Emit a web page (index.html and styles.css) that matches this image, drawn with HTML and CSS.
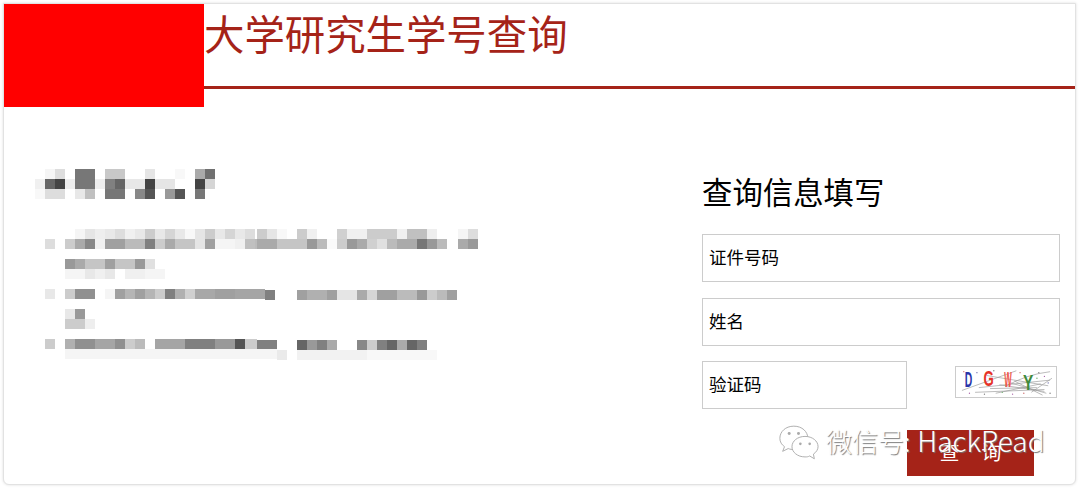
FILE: index.html
```html
<!DOCTYPE html>
<html lang="zh-CN">
<head>
    <meta charset="UTF-8">
    <title>大学研究生学号查询</title>
    <link rel="stylesheet" href="styles.css">
</head>
<body>
    <div class="card">
        <!-- Header -->
        <header class="top">
            <div class="logo"></div>
            <h1 class="site-title">大学研究生学号查询</h1>
        </header>

        <main class="content">
            <!-- Blurred notice -->
            <section class="notice">
                <svg class="mosaic" width="450" height="195" viewBox="35 169 450 195" shape-rendering="crispEdges">
                    <!-- heading -->
                    <g>
                        <rect x="45" y="169" width="10" height="10" fill="#f5f5f5"/><rect x="55" y="169" width="10" height="10" fill="#ddd"/><rect x="75" y="169" width="20" height="10" fill="#777"/><rect x="105" y="169" width="20" height="10" fill="#c8c8c8"/><rect x="145" y="169" width="10" height="10" fill="#e5e5e5"/><rect x="175" y="169" width="10" height="10" fill="#f8f8f8"/><rect x="195" y="169" width="10" height="10" fill="#aaa"/><rect x="205" y="169" width="10" height="10" fill="#707070"/>
                        <rect x="35" y="179" width="10" height="10" fill="#f0f0f0"/><rect x="45" y="179" width="10" height="10" fill="#666"/><rect x="55" y="179" width="10" height="10" fill="#444"/><rect x="65" y="179" width="10" height="10" fill="#eee"/><rect x="75" y="179" width="20" height="10" fill="#777"/><rect x="95" y="179" width="10" height="10" fill="#eee"/><rect x="105" y="179" width="10" height="10" fill="#808080"/><rect x="115" y="179" width="10" height="10" fill="#666"/><rect x="125" y="179" width="20" height="10" fill="#e8e8e8"/><rect x="145" y="179" width="10" height="10" fill="#444"/><rect x="155" y="179" width="20" height="10" fill="#e5e5e5"/><rect x="195" y="179" width="10" height="10" fill="#444"/><rect x="205" y="179" width="10" height="10" fill="#d5d5d5"/>
                        <rect x="35" y="189" width="10" height="10" fill="#f8f8f8"/><rect x="45" y="189" width="20" height="10" fill="#ddd"/><rect x="75" y="189" width="10" height="10" fill="#e8e8e8"/><rect x="85" y="189" width="10" height="10" fill="#c0c0c0"/><rect x="105" y="189" width="20" height="10" fill="#777"/><rect x="135" y="189" width="10" height="10" fill="#888"/><rect x="145" y="189" width="10" height="10" fill="#555"/><rect x="165" y="189" width="10" height="10" fill="#999"/><rect x="175" y="189" width="10" height="10" fill="#555"/><rect x="195" y="189" width="10" height="10" fill="#777"/>
                    </g>
                    <!-- first item -->
                    <g>
                        <rect x="75" y="229" width="10" height="10" fill="#f5f5f5"/><rect x="85" y="229" width="10" height="10" fill="#e5e5e5"/><rect x="95" y="229" width="10" height="10" fill="#eee"/><rect x="105" y="229" width="10" height="10" fill="#e8e8e8"/><rect x="115" y="229" width="10" height="10" fill="#ddd"/><rect x="125" y="229" width="10" height="10" fill="#f0f0f0"/><rect x="135" y="229" width="10" height="10" fill="#e8e8e8"/><rect x="145" y="229" width="10" height="10" fill="#ccc"/><rect x="155" y="229" width="10" height="10" fill="#e8e8e8"/><rect x="165" y="229" width="10" height="10" fill="#d5d5d5"/><rect x="175" y="229" width="10" height="10" fill="#e8e8e8"/><rect x="185" y="229" width="10" height="10" fill="#f8f8f8"/><rect x="195" y="229" width="10" height="10" fill="#e5e5e5"/><rect x="205" y="229" width="10" height="10" fill="#ccc"/><rect x="215" y="229" width="10" height="10" fill="#e8e8e8"/><rect x="225" y="229" width="10" height="10" fill="#d5d5d5"/><rect x="235" y="229" width="10" height="10" fill="#e8e8e8"/><rect x="245" y="229" width="10" height="10" fill="#ddd"/><rect x="257" y="229" width="10" height="10" fill="#ccc"/><rect x="267" y="229" width="10" height="10" fill="#e5e5e5"/><rect x="277" y="229" width="10" height="10" fill="#f8f8f8"/><rect x="297" y="229" width="10" height="10" fill="#ccc"/><rect x="307" y="229" width="10" height="10" fill="#f0f0f0"/><rect x="337" y="229" width="10" height="10" fill="#d0d0d0"/><rect x="347" y="229" width="20" height="10" fill="#f0f0f0"/><rect x="367" y="229" width="30" height="10" fill="#ccc"/><rect x="397" y="229" width="10" height="10" fill="#f0f0f0"/><rect x="407" y="229" width="20" height="10" fill="#c0c0c0"/><rect x="427" y="229" width="10" height="10" fill="#eee"/><rect x="458" y="229" width="10" height="10" fill="#f5f5f5"/><rect x="468" y="229" width="10" height="10" fill="#ddd"/>
                        <rect x="45" y="239" width="10" height="10" fill="#ddd"/><rect x="65" y="239" width="10" height="10" fill="#ccc"/><rect x="75" y="239" width="10" height="10" fill="#aaa"/><rect x="85" y="239" width="10" height="10" fill="#888"/><rect x="95" y="239" width="10" height="10" fill="#f0f0f0"/><rect x="105" y="239" width="20" height="10" fill="#a0a0a0"/><rect x="125" y="239" width="20" height="10" fill="#bbb"/><rect x="145" y="239" width="10" height="10" fill="#808080"/><rect x="155" y="239" width="10" height="10" fill="#ccc"/><rect x="165" y="239" width="10" height="10" fill="#aaa"/><rect x="175" y="239" width="20" height="10" fill="#c5c5c5"/><rect x="195" y="239" width="10" height="10" fill="#e5e5e5"/><rect x="205" y="239" width="10" height="10" fill="#a0a0a0"/><rect x="215" y="239" width="20" height="10" fill="#f5f5f5"/><rect x="235" y="239" width="10" height="10" fill="#f0f0f0"/><rect x="245" y="239" width="10" height="10" fill="#c0c0c0"/><rect x="255" y="239" width="2" height="10" fill="#bbb"/><rect x="257" y="239" width="20" height="10" fill="#aaa"/><rect x="277" y="239" width="30" height="10" fill="#c5c5c5"/><rect x="307" y="239" width="10" height="10" fill="#999"/><rect x="317" y="239" width="10" height="10" fill="#bbb"/><rect x="327" y="239" width="10" height="10" fill="#fafafa"/><rect x="337" y="239" width="10" height="10" fill="#ccc"/><rect x="347" y="239" width="10" height="10" fill="#999"/><rect x="357" y="239" width="10" height="10" fill="#aaa"/><rect x="367" y="239" width="10" height="10" fill="#d0d0d0"/><rect x="377" y="239" width="10" height="10" fill="#e0e0e0"/><rect x="387" y="239" width="10" height="10" fill="#bbb"/><rect x="397" y="239" width="20" height="10" fill="#aaa"/><rect x="417" y="239" width="10" height="10" fill="#777"/><rect x="427" y="239" width="10" height="10" fill="#999"/><rect x="437" y="239" width="10" height="10" fill="#bbb"/><rect x="458" y="239" width="10" height="10" fill="#aaa"/><rect x="468" y="239" width="10" height="10" fill="#999"/>
                        <rect x="65" y="259" width="10" height="10" fill="#999"/><rect x="75" y="259" width="10" height="10" fill="#aaa"/><rect x="85" y="259" width="20" height="10" fill="#c5c5c5"/><rect x="105" y="259" width="10" height="10" fill="#a0a0a0"/><rect x="115" y="259" width="20" height="10" fill="#c5c5c5"/><rect x="135" y="259" width="10" height="10" fill="#999"/><rect x="145" y="259" width="10" height="10" fill="#e0e0e0"/>
                        <rect x="65" y="269" width="20" height="10" fill="#f5f5f5"/><rect x="85" y="269" width="10" height="10" fill="#e8e8e8"/><rect x="95" y="269" width="10" height="10" fill="#f0f0f0"/><rect x="105" y="269" width="10" height="10" fill="#e8e8e8"/><rect x="125" y="269" width="20" height="10" fill="#f0f0f0"/><rect x="145" y="269" width="20" height="10" fill="#f5f5f5"/>
                    </g>
                    <!-- second item -->
                    <g>
                        <rect x="45" y="289" width="10" height="10" fill="#e8e8e8"/><rect x="65" y="289" width="10" height="10" fill="#ccc"/><rect x="75" y="289" width="20" height="10" fill="#909090"/><rect x="105" y="289" width="10" height="10" fill="#f5f5f5"/><rect x="115" y="289" width="10" height="10" fill="#a0a0a0"/><rect x="125" y="289" width="10" height="10" fill="#b5b5b5"/><rect x="135" y="289" width="10" height="10" fill="#a0a0a0"/><rect x="145" y="289" width="10" height="10" fill="#b5b5b5"/><rect x="155" y="289" width="10" height="10" fill="#ccc"/><rect x="165" y="289" width="10" height="10" fill="#808080"/><rect x="175" y="289" width="10" height="10" fill="#b0b0b0"/><rect x="185" y="289" width="10" height="10" fill="#d0d0d0"/><rect x="195" y="289" width="20" height="10" fill="#a8a8a8"/><rect x="215" y="289" width="20" height="10" fill="#a0a0a0"/><rect x="235" y="289" width="30" height="10" fill="#a5a5a5"/><rect x="265" y="290" width="10" height="10" fill="#808080"/><rect x="297" y="290" width="10" height="10" fill="#a0a0a0"/><rect x="307" y="290" width="20" height="10" fill="#b0b0b0"/><rect x="327" y="290" width="10" height="10" fill="#a0a0a0"/><rect x="337" y="290" width="20" height="10" fill="#e5e5e5"/><rect x="357" y="290" width="10" height="10" fill="#aaa"/><rect x="367" y="290" width="10" height="10" fill="#d5d5d5"/><rect x="377" y="290" width="20" height="10" fill="#a0a0a0"/><rect x="397" y="290" width="20" height="10" fill="#bbb"/><rect x="417" y="290" width="10" height="10" fill="#999"/><rect x="427" y="290" width="10" height="10" fill="#ccc"/><rect x="437" y="290" width="10" height="10" fill="#bbb"/><rect x="447" y="290" width="10" height="10" fill="#a0a0a0"/>
                        <rect x="65" y="309" width="10" height="10" fill="#e8e8e8"/><rect x="75" y="309" width="10" height="10" fill="#999"/>
                        <rect x="65" y="319" width="20" height="10" fill="#ccc"/><rect x="85" y="319" width="10" height="10" fill="#eee"/>
                    </g>
                    <!-- third item -->
                    <g>
                        <rect x="45" y="339" width="10" height="10" fill="#ccc"/><rect x="65" y="339" width="10" height="10" fill="#b0b0b0"/><rect x="75" y="339" width="20" height="10" fill="#909090"/><rect x="95" y="339" width="20" height="10" fill="#a5a5a5"/><rect x="115" y="339" width="10" height="10" fill="#909090"/><rect x="125" y="339" width="10" height="10" fill="#ccc"/><rect x="135" y="339" width="10" height="10" fill="#bbb"/><rect x="155" y="339" width="30" height="10" fill="#a5a5a5"/><rect x="185" y="339" width="30" height="10" fill="#808080"/><rect x="215" y="339" width="20" height="10" fill="#999"/><rect x="235" y="339" width="10" height="10" fill="#555"/><rect x="245" y="339" width="12" height="10" fill="#ccc"/><rect x="257" y="340" width="20" height="10" fill="#808080"/><rect x="297" y="340" width="10" height="10" fill="#666"/><rect x="307" y="340" width="10" height="10" fill="#999"/><rect x="317" y="340" width="10" height="10" fill="#808080"/><rect x="327" y="340" width="10" height="10" fill="#aaa"/><rect x="357" y="340" width="10" height="10" fill="#888"/><rect x="367" y="340" width="10" height="10" fill="#ccc"/><rect x="377" y="340" width="10" height="10" fill="#808080"/><rect x="387" y="340" width="10" height="10" fill="#666"/><rect x="397" y="340" width="10" height="10" fill="#aaa"/><rect x="407" y="340" width="10" height="10" fill="#666"/><rect x="417" y="340" width="10" height="10" fill="#808080"/>
                        <rect x="65" y="349" width="212" height="10" fill="#f5f5f5"/><rect x="277" y="350" width="10" height="10" fill="#eaeaea"/><rect x="297" y="350" width="70" height="10" fill="#f2f2f2"/><rect x="367" y="350" width="70" height="10" fill="#f8f8f8"/>
                    </g>
                </svg>
            </section>

            <!-- Query form -->
            <section class="query">
                <h2 class="query-title">查询信息填写</h2>
                <form class="query-form">
                    <input class="field" type="text" placeholder="证件号码">
                    <input class="field" type="text" placeholder="姓名">
                    <div class="captcha-row">
                        <input class="field field-short" type="text" placeholder="验证码">
                        <svg class="captcha" width="102" height="32" viewBox="0 0 102 32">
                            <g fill="none" stroke="#999" stroke-width="0.7">
                                <path d="M4 25 L62 4"/><path d="M22 22 L98 14"/><path d="M30 9 L96 20"/><path d="M18 27 L92 24"/><path d="M50 21 Q72 8 98 5"/><path d="M40 28 L88 18"/><path d="M56 17 L94 28"/><path d="M60 15 L90 30"/><path d="M78 27 L100 12"/><path d="M34 23 L84 22"/><path d="M44 19 L92 26"/>
                            </g>
                            <g>
                                <circle cx="6" cy="5" r="0.7" fill="#c66"/><circle cx="20" cy="6" r="0.7" fill="#66a"/><circle cx="38" cy="4" r="0.7" fill="#777"/><circle cx="47" cy="27" r="0.7" fill="#6a6"/><circle cx="12" cy="28" r="0.7" fill="#a6a"/><circle cx="66" cy="6" r="0.7" fill="#c66"/><circle cx="86" cy="6" r="0.7" fill="#777"/><circle cx="92" cy="10" r="0.7" fill="#a6a"/><circle cx="96" cy="17" r="0.7" fill="#66a"/><circle cx="84" cy="12" r="0.7" fill="#6a6"/><circle cx="70" cy="28" r="0.7" fill="#c66"/><circle cx="28" cy="29" r="0.7" fill="#777"/><circle cx="58" cy="29" r="0.7" fill="#a6a"/><circle cx="98" cy="28" r="0.7" fill="#777"/>
                            </g>
                            <text class="captcha-char" x="7" y="21" fill="#2a35a8" textLength="8" lengthAdjust="spacingAndGlyphs">D</text>
                            <text class="captcha-char" x="27" y="20" fill="#e53328" textLength="11" lengthAdjust="spacingAndGlyphs">G</text>
                            <text class="captcha-char" x="49" y="21" fill="#f0564a" textLength="8" lengthAdjust="spacingAndGlyphs">W</text>
                            <text class="captcha-char" x="69" y="25" fill="#3f8a3a" textLength="11" lengthAdjust="spacingAndGlyphs">Y</text>
                        </svg>
                    </div>
                    <button class="submit" type="button">查&nbsp;&nbsp;&nbsp;&nbsp;询</button>
                </form>
            </section>
        </main>
    </div>

    <!-- WeChat watermark -->
    <div class="watermark">
        <svg class="wm-icon" width="41" height="36" viewBox="0 0 44 38">
            <g fill="#fff" stroke="#aaa" stroke-width="1">
                <path d="M17 2 C8 2 2 8 2 15 C2 19 4 22 7 24 L5 29 L11 26 C13 27 15 27 17 27 C26 27 32 21 32 15 C32 8 26 2 17 2 Z"/>
                <path d="M29 13 C21 13 15 18 15 24 C15 30 21 35 29 35 C31 35 32 35 34 34 L39 37 L38 32 C41 30 43 27 43 24 C43 18 37 13 29 13 Z"/>
            </g>
            <g fill="#aaa">
                <circle cx="12" cy="10" r="1.6"/><circle cx="22" cy="10" r="1.6"/><circle cx="24" cy="21" r="1.4"/><circle cx="34" cy="21" r="1.4"/>
            </g>
        </svg>
        <span class="wm-text">微信号: <span class="wm-name">HackRead</span></span>
    </div>
</body>
</html>
```

FILE: styles.css
```css
html, body {
    height: 100%;
    overflow: hidden;
}

body {
    font-family: "Liberation Sans", "Noto Sans CJK SC", sans-serif;
    background-color: #fff;
    margin: 0;
    padding: 3px 4px 4px 3px;
    box-sizing: border-box;
}

.card {
    height: 100%;
    box-sizing: border-box;
    border: 1px solid #e2e2e2;
    border-radius: 0 0 6px 6px;
    box-shadow: 0 0 3px #ddd;
    background-color: #fff;
    overflow: hidden;
}

.top {
    display: flex;
    align-items: flex-start;
}

.logo {
    width: 200px;
    height: 103px;
    background-color: #f00;
}

.site-title {
    flex: 1;
    height: 82px;
    margin: 0;
    font-size: 40.4px;
    font-weight: normal;
    line-height: 65px;
    color: #a52318;
    border-bottom: 3px solid #a52318;
}

.content {
    display: flex;
    justify-content: space-between;
}

.notice {
    padding: 62px 0 0 31px;
}

.mosaic {
    display: block;
    filter: blur(0.6px);
}

.query {
    width: 358px;
    margin-right: 15px;
    padding-top: 62px;
}

.query-title {
    margin: 0 0 17px;
    font-size: 30.4px;
    font-weight: normal;
    line-height: 48px;
    color: #000;
}

.query-form {
    display: flex;
    flex-direction: column;
    gap: 16px;
}

.field {
    width: 100%;
    height: 48px;
    box-sizing: border-box;
    padding: 1px 6px 0;
    border: 1px solid #ccc;
    border-radius: 0;
    font-family: inherit;
    font-size: 17.5px;
    outline: none;
}

.field::placeholder {
    color: #000;
    opacity: 1;
}

.field-short {
    width: 205px;
}

.captcha-row {
    display: flex;
    justify-content: space-between;
    align-items: flex-start;
    margin-top: -1px;
    padding-right: 3px;
}

.captcha {
    margin-top: 5px;
    border: 1px solid #ccc;
    box-sizing: border-box;
}

.captcha-char {
    font-family: "Liberation Sans", sans-serif;
    font-size: 24px;
    font-weight: bold;
}

.submit {
    align-self: flex-start;
    width: 127px;
    height: 46px;
    margin: 5px 0 0 205px;
    padding: 0 0 3px;
    background-color: #a52318;
    color: #fff;
    border: none;
    font-family: inherit;
    font-size: 20px;
    cursor: pointer;
}

.watermark {
    position: absolute;
    left: 778px;
    top: 423px;
    display: flex;
    align-items: center;
    gap: 7px;
}

.wm-text {
    margin-top: -3px;
    font-family: "Noto Sans CJK SC", sans-serif;
    font-size: 26px;
    font-weight: 300;
    word-spacing: 1px;
    color: #fff;
    text-shadow: 1px 1px 1px #777;
    white-space: nowrap;
}

.wm-name {
    font-size: 28px;
}
```
